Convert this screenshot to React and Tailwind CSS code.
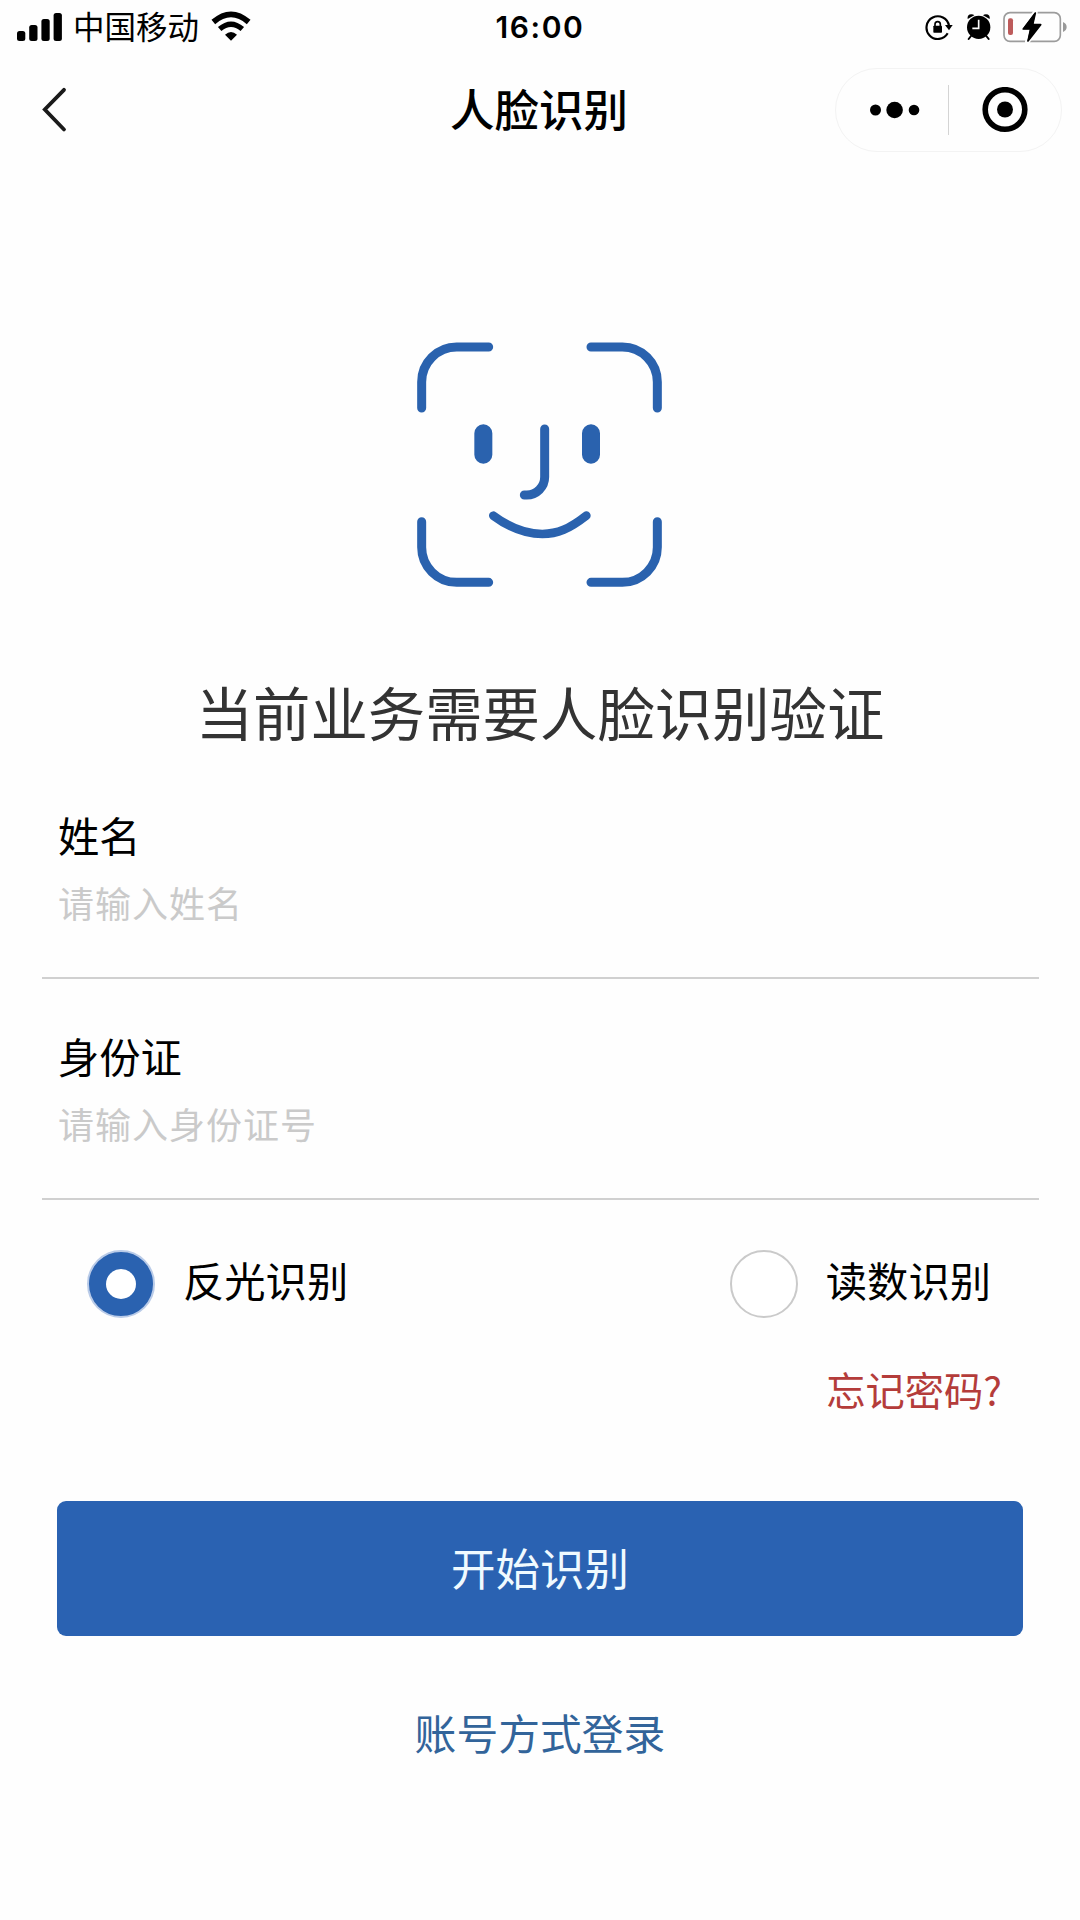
import React, { useState } from "react";

const SignalIcon = () => (
  <svg className="h-[28px] w-[45px]" viewBox="0 0 45 28" fill="#000">
    <rect x="0" y="18" width="8.3" height="10" rx="2.5" />
    <rect x="12.2" y="12" width="8.3" height="16" rx="2.5" />
    <rect x="24.4" y="6" width="8.3" height="22" rx="2.5" />
    <rect x="36.6" y="0" width="8.3" height="28" rx="2.5" />
  </svg>
);

const WifiIcon = () => (
  <svg className="h-[30px] w-[40px]" viewBox="634 31 120 90" fill="none">
    <path d="M641 64 Q694 18 747 64" stroke="#000" strokeWidth="17" />
    <path d="M660 85 Q694 56 728 85" stroke="#000" strokeWidth="16" />
    <path d="M676 102 Q694 86 712 102 L694 120 Z" fill="#000" />
  </svg>
);

const RotationLockIcon = () => (
  <svg className="h-[28px] w-[28px]" viewBox="314 40 84 84" fill="none">
    <path d="M382 101 A34 34 0 1 1 386 78" stroke="#000" strokeWidth="6.5" />
    <path d="M374 76 H397 L386 92 Z" fill="#000" />
    <rect x="339" y="78" width="26" height="21" rx="2" fill="#000" />
    <path d="M344 80 V74 A8 8 0 0 1 360 74 V80" stroke="#000" strokeWidth="5" />
  </svg>
);

const AlarmIcon = () => (
  <svg className="h-[28px] w-[26px]" viewBox="438 38 78 84" fill="none">
    <circle cx="476" cy="81" r="35" fill="#000" />
    <path d="M443 56 Q441 42 454 42 Q460 42 463 45 Z" fill="#000" />
    <path d="M509 56 Q511 42 498 42 Q492 42 489 45 Z" fill="#000" />
    <path d="M453 107 L446 116 M499 107 L506 116" stroke="#000" strokeWidth="6" strokeLinecap="round" />
    <path d="M476 58 V84 H457" stroke="#fff" strokeWidth="5" />
  </svg>
);

const BatteryIcon = () => (
  <svg className="h-[32px] w-[64px]" viewBox="547 30 192 96" fill="none">
    <rect x="550" y="35" width="169" height="86" rx="18" stroke="#9c9c9c" strokeWidth="5" />
    <rect x="562" y="52" width="15" height="50" rx="6" fill="#bd5b5b" />
    <path d="M727 63 Q738 68 738 78 Q738 88 727 93 Z" fill="#999" />
    <path
      d="M644 34 L605 85 H628 L620 122 L662 70 H638 Z"
      fill="#000"
      stroke="#fff"
      strokeWidth="14"
      strokeLinejoin="round"
      paintOrder="stroke"
    />
    <path d="M644 36 L608 84 H630 L622 120 L660 71 H636 Z" fill="#000" stroke="#000" strokeWidth="5" strokeLinejoin="round" />
  </svg>
);

const FaceIcon = () => (
  <svg className="h-[270px] w-[280px]" viewBox="0 0 840 810" fill="none" stroke="#2a62ae" strokeLinecap="round">
    {/* scan frame */}
    <g strokeWidth="27">
      <path d="M65 234 V156 A105 105 0 0 1 170 51 H266" />
      <path d="M573 51 H667 A105 105 0 0 1 772 156 V234" />
      <path d="M65 575 V652 A105 105 0 0 0 170 757 H266" />
      <path d="M573 757 H667 A105 105 0 0 0 772 652 V575" />
    </g>
    {/* eyes */}
    <path d="M250 310 V374 M573 310 V374" strokeWidth="54" />
    {/* nose and mouth */}
    <path d="M434 297 V441 A54 54 0 0 1 380 495 H373" strokeWidth="27" />
    <path d="M280 557 C330 594 380 612 427 612 C472 612 508 597 559 557" strokeWidth="26" />
  </svg>
);

function Field({ label, name, value, onChange, placeholder }) {
  return (
    <div className="h-[221px] border-b-2 border-[#d0d0d0] pt-[46px] pl-[16px]">
      <label htmlFor={name} className="block text-[41.3px] leading-[60px] text-black">
        {label}
      </label>
      <input
        id={name}
        name={name}
        value={value}
        onChange={onChange}
        placeholder={placeholder}
        className="mt-[10px] block h-[56px] w-full text-[36px] tracking-[1px] text-black outline-none placeholder:text-[#cacaca]"
      />
    </div>
  );
}

function Radio({ label, checked, onSelect }) {
  return (
    <button type="button" onClick={onSelect} className="flex items-center">
      <span
        className={
          checked
            ? "flex h-[68px] w-[68px] items-center justify-center rounded-full border-2 border-[#b9cbe8] bg-[#2a62b0]"
            : "h-[68px] w-[68px] rounded-full border-2 border-[#cacaca] bg-white"
        }
      >
        {checked && <span className="h-[30px] w-[30px] rounded-full bg-white" />}
      </span>
      <span className="-mt-[11px] ml-[28px] text-[41.3px] leading-[60px] text-black">{label}</span>
    </button>
  );
}

export default function App() {
  const [form, setForm] = useState({ realName: "", idCard: "" });
  const [mode, setMode] = useState("light");

  const handleChange = (e) => {
    const { name, value } = e.target;
    setForm((prev) => ({ ...prev, [name]: value }));
  };

  return (
    <div className="flex h-[1920px] w-[1080px] flex-col overflow-hidden bg-[#fefefe] font-['Noto_Sans_CJK_SC',sans-serif]">
      {/* Status bar */}
      <div className="grid h-[54px] grid-cols-3 items-center pr-[13px] pl-[17px]">
        <div className="flex items-center">
          <SignalIcon />
          <span className="-mt-[5px] ml-[11px] text-[31.5px] leading-[48px] text-black">中国移动</span>
          <span className="-mt-[3px] ml-[12px]">
            <WifiIcon />
          </span>
        </div>
        <div className="pr-[4px] text-center font-['Inter',sans-serif] text-[30px] leading-[54px] font-semibold tracking-[1.6px] text-black">
          16:00
        </div>
        <div className="flex items-center justify-end">
          <RotationLockIcon />
          <span className="ml-[13px]">
            <AlarmIcon />
          </span>
          <span className="ml-[11px]">
            <BatteryIcon />
          </span>
        </div>
      </div>

      {/* Navigation */}
      <div className="grid h-[112px] grid-cols-3 items-center">
        <svg className="ml-[40px] h-[48px] w-[28px]" viewBox="40 86 28 48" fill="none">
          <path d="M64 89.8 L44.8 109.5 L64 129.5" stroke="#1a1a1a" strokeWidth="3.8" strokeLinecap="round" />
        </svg>
        <h1 className="pr-[2px] pb-[4px] text-center text-[44.5px] leading-[64px] font-medium text-black">人脸识别</h1>
        <div className="mr-[18px] flex h-[84px] w-[227px] items-center justify-self-end rounded-full border border-[#f3f3f3]">
          <svg className="h-[20px] w-[112px]" viewBox="836 100 112 20">
            <circle cx="875.5" cy="110" r="5.5" />
            <circle cx="894.6" cy="110" r="8.3" />
            <circle cx="914" cy="110" r="5.3" />
          </svg>
          <span className="h-[50px] w-px bg-[#d4d4d4]" />
          <svg className="h-[46px] w-[112px]" viewBox="949 87 112 46">
            <circle cx="1005" cy="109.5" r="19.8" fill="none" stroke="#000" strokeWidth="5.6" />
            <circle cx="1005" cy="109.5" r="8" />
          </svg>
        </div>
      </div>

      <div className="mt-[164px] flex justify-center">
        <FaceIcon />
      </div>

      <h2 className="mt-[71px] text-center text-[57.4px] leading-[80px] text-[#333]">当前业务需要人脸识别验证</h2>

      <div className="mt-[7px] mr-[41px] ml-[42px]">
        <Field label="姓名" name="realName" value={form.realName} onChange={handleChange} placeholder="请输入姓名" />
        <Field label="身份证" name="idCard" value={form.idCard} onChange={handleChange} placeholder="请输入身份证号" />
      </div>

      <div className="mt-[50px] mr-[89px] ml-[87px] flex justify-between">
        <Radio label="反光识别" checked={mode === "light"} onSelect={() => setMode("light")} />
        <Radio label="读数识别" checked={mode === "number"} onSelect={() => setMode("number")} />
      </div>

      <a className="mt-[41px] mr-[78px] self-end text-[39.3px] leading-[60px] text-[#b43c3a]">忘记密码?</a>

      <button
        type="button"
        className="mx-[57px] mt-[82px] h-[135px] shrink-0 rounded-[9px] bg-[#2a62b2] pb-[3px] text-[44.5px] leading-[64px] text-[#f0faff]"
      >
        开始识别
      </button>

      <a className="mt-[66px] self-center text-[41.8px] leading-[60px] text-[#32649a]">账号方式登录</a>
    </div>
  );
}
